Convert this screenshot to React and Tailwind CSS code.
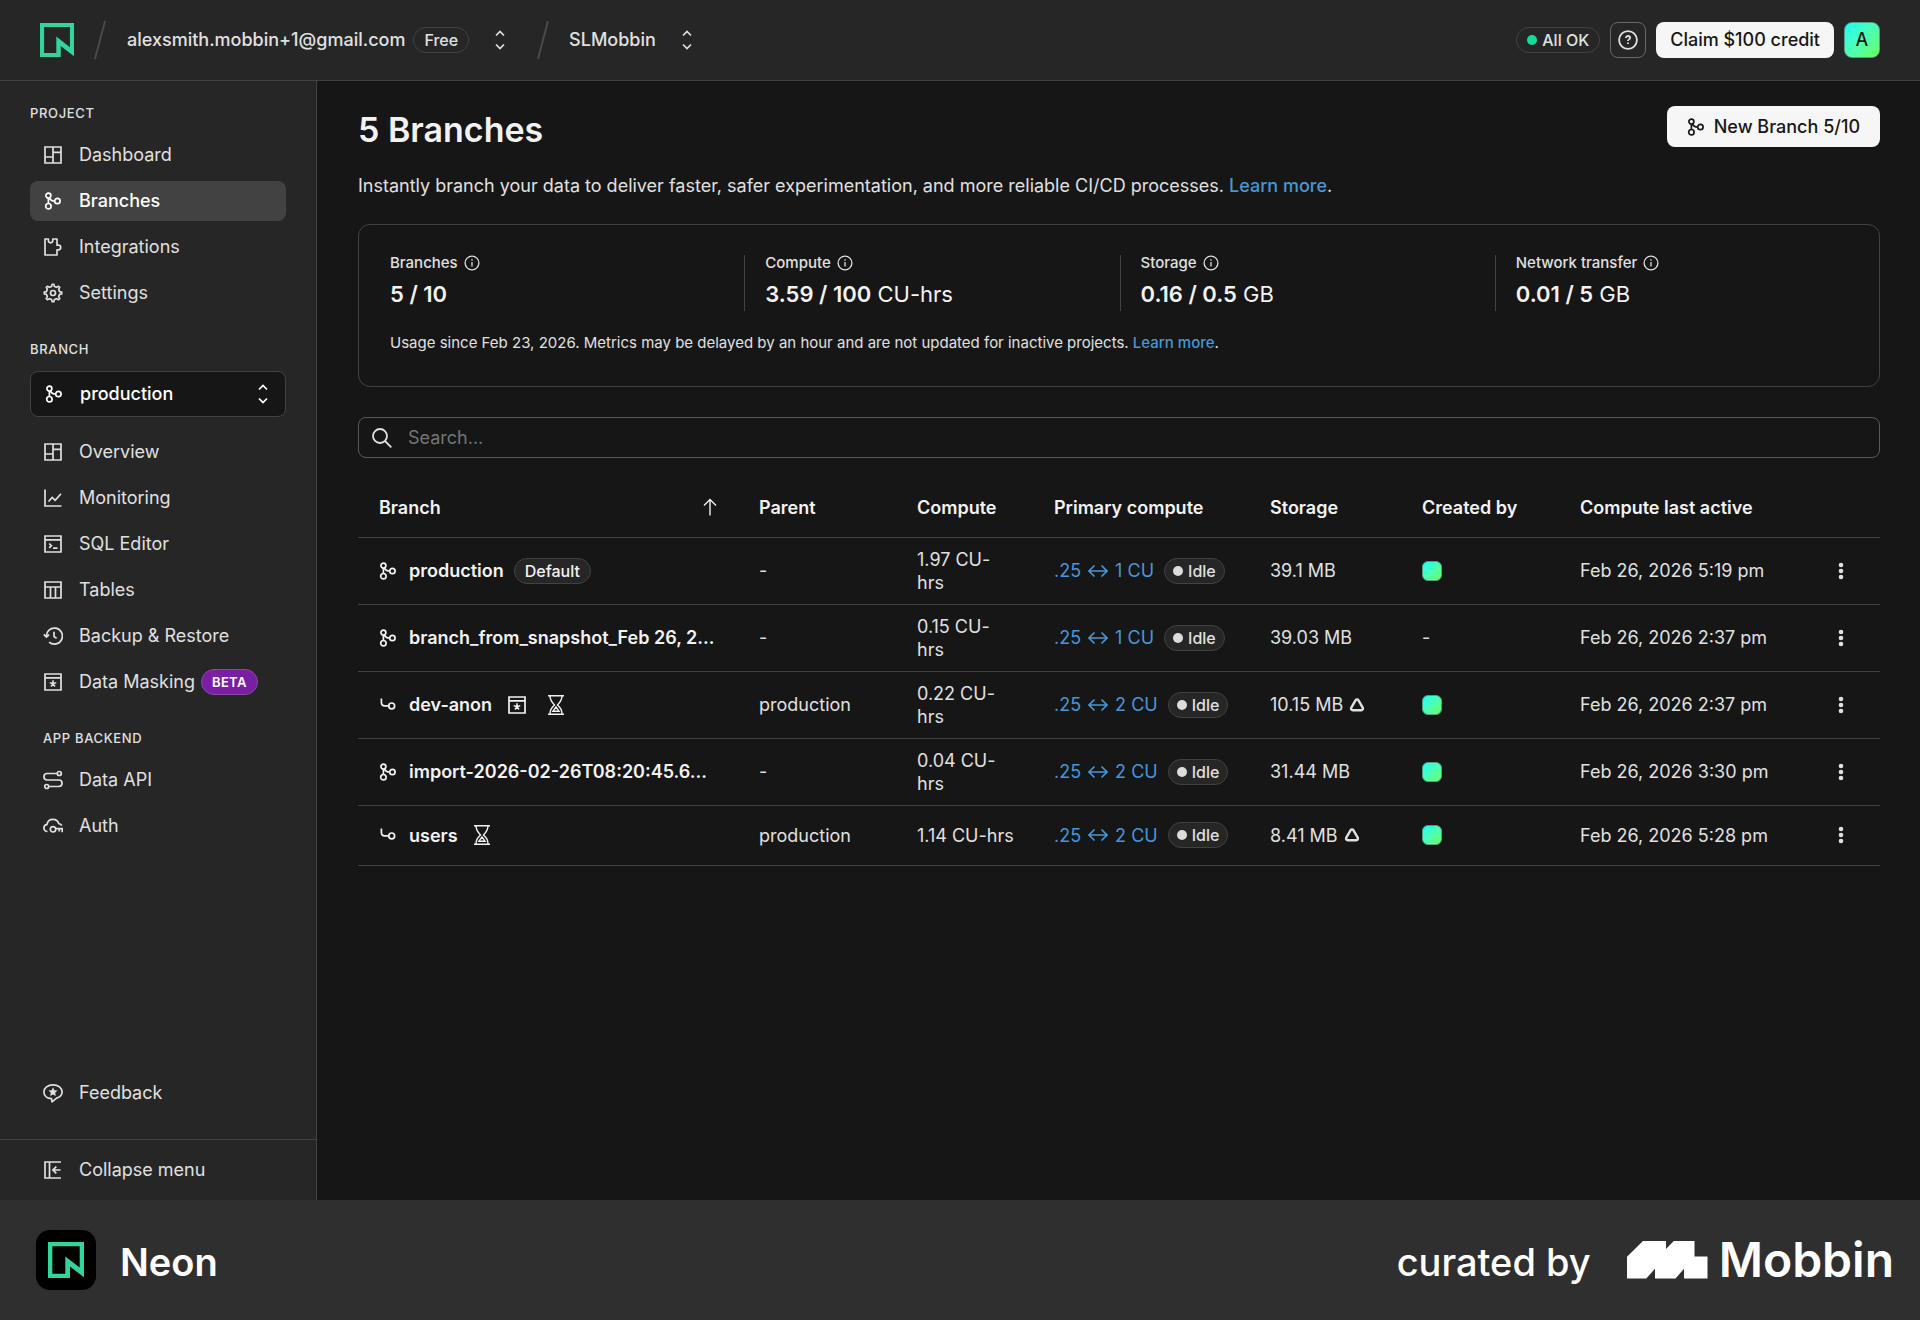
import { useState } from 'react';

const Icon = ({ className = 'w-[18px] h-[18px]', size = 18, children }) => (
    <svg viewBox={`0 0 ${size} ${size}`} className={`${className} shrink-0`} fill="none" stroke="currentColor" strokeWidth="1.7" aria-hidden="true">
        {children}
    </svg>
);

const BranchIcon = ({ className }) => (
    <Icon className={className}>
        <circle cx="4.4" cy="3.6" r="2.5" />
        <circle cx="4.4" cy="14.2" r="2.7" />
        <circle cx="13.4" cy="9" r="2.7" />
        <path d="M4.4 6.1v5.4M5.4 5.9C6.2 8 7.6 9 10.7 9" />
    </Icon>
);

const ChildBranchIcon = () => (
    <Icon>
        <path d="M2.4 2.5v3.8c0 2.6 1 3.6 3.2 3.6h4" />
        <circle cx="12.7" cy="9.9" r="2.9" />
    </Icon>
);

const LayoutIcon = () => (
    <Icon>
        <path d="M1 1h16v16H1zM9 1v16M1 11h8M9 6.3h8" />
    </Icon>
);

const PuzzleIcon = () => (
    <Icon>
        <path d="M1 1h3.4v1.6a2.2 2.2 0 0 0 4.400 0V1h4.200v6.200h1.400a2.300 2.300 0 0 1 0 4.600H13V17H1z" strokeLinejoin="round" />
    </Icon>
);

const GearIcon = () => (
    <Icon className="w-5 h-5" size={24}>
        <g strokeWidth="2" strokeLinejoin="round">
            <path d="M10.3 4.1 11 1.5h2l.7 2.6 2.6 1.1 2.4-1.3 1.400 1.400-1.300 2.400 1.100 2.600 2.600.7v2l-2.600.7-1.100 2.600 1.300 2.400-1.400 1.400-2.400-1.300-2.600 1.100-.7 2.600h-2l-.7-2.600-2.600-1.100-2.400 1.300-1.400-1.400 1.300-2.400-1.100-2.600-2.600-.7v-2l2.600-.7 1.100-2.600-1.300-2.400 1.400-1.400 2.400 1.300z" />
            <circle cx="12" cy="12" r="3" />
        </g>
    </Icon>
);

const ChartIcon = () => (
    <Icon>
        <path d="M1 .5V17h16.500M4.500 12.500 8.200 8.500l3 2.800L17 4.800" />
    </Icon>
);

const TerminalIcon = () => (
    <Icon>
        <path d="M1 1h16v16H1zM1 4.800h16M5.200 8.500l2.200 2.200-2.200 2.200M9 13.200h4.500" />
    </Icon>
);

const TablesIcon = () => (
    <Icon>
        <path d="M1 1h16v16H1zM1 6h16M6.500 6v11M11.500 6v11" />
    </Icon>
);

const HistoryIcon = () => (
    <Icon className="w-5 h-5" size={20}>
        <path d="M3.400 10.800a8 8 0 1 1 2.700 5.300M.8 8.400l2.600 2.700 2.700-2.500M11 5.800v4.700l2.600 1.900" />
    </Icon>
);

const MaskIcon = ({ className }) => (
    <Icon className={className}>
        <path d="M1 1h16v16H1zM1 4.800h16" />
        <path d="M9 10.700V7.200M9 10.700l3.300-1.100M9 10.700l2 2.800M9 10.700l-2 2.800M9 10.700 5.700 9.600" strokeWidth="1.500" />
    </Icon>
);

const RouteIcon = () => (
    <Icon className="w-5 h-5" size={20}>
        <circle cx="16.300" cy="3.500" r="2" />
        <circle cx="3.700" cy="16.500" r="2" />
        <path d="M14.300 3.500H4.200a3.250 3.250 0 0 0 0 6.500h11.600a3.250 3.250 0 0 1 0 6.500H5.700" />
    </Icon>
);

const CloudKeyIcon = () => (
    <Icon className="w-5 h-5" size={20}>
        <path d="M4.500 15.500C2.300 15.500.9 14 .9 12c0-1.900 1.300-3.300 3.100-3.600C4.500 5.400 6.900 3.300 10 3.300c2.800 0 5 1.700 5.700 4.200 1.400.4 2.500 1 3.100 2.200" />
        <circle cx="10" cy="13.300" r="2.700" />
        <path d="M12.700 12.700h6.500v3.500M16.200 12.700v2.800" />
    </Icon>
);

const FeedbackIcon = () => (
    <Icon className="w-5 h-5" size={20}>
        <path d="M8.500 15.700C4 15.300.9 12.500.9 8.900.9 5 4.800 1.900 10 1.900s9.100 3.100 9.100 7c0 3-2.400 5.200-5.500 6.200L9 18.800z" strokeLinejoin="round" />
        <path d="m10 4.300 1.400 2.900 3.100.4-2.300 2.200.6 3.100-2.800-1.500-2.800 1.500.6-3.100-2.300-2.200 3.100-.4z" fill="currentColor" stroke="none" />
    </Icon>
);

const CollapseIcon = () => (
    <Icon>
        <path d="M17 1H1v16h16M5.500 1v16M16.500 9H9M12.300 5.600 8.900 9l3.400 3.400" />
    </Icon>
);

const HourglassIcon = () => (
    <svg viewBox="0 0 16 20" className="w-4 h-5 shrink-0" fill="none" stroke="currentColor" strokeWidth="1.400" aria-hidden="true">
        <path d="M0 .8h16M0 19.200h16M2 .8c0 4 1 5.700 4.500 9.200C3 13.500 2 15 2 19.200M14 .8c0 4-1 5.700-4.500 9.200 3.500 3.500 4.500 5 4.500 9.200M5 16.200 8 12l3 4.200z" />
    </svg>
);

const DeltaIcon = () => (
    <svg viewBox="0 0 16 14" className="w-4 h-[14px] shrink-0" fill="none" stroke="currentColor" strokeWidth="2.400" strokeLinejoin="round" aria-hidden="true">
        <path d="M6.500 2.300c.7-1.200 2.300-1.200 3 0l4.200 7.300c.7 1.200-.1 2.600-1.500 2.600H3.800c-1.400 0-2.200-1.400-1.500-2.600z" />
    </svg>
);

const SelectorIcon = () => (
    <svg viewBox="0 0 10 20" className="w-[10px] h-5 shrink-0" fill="none" stroke="currentColor" strokeWidth="1.700" aria-hidden="true">
        <path d="M1 5.500 5 1.500l4 4M1 14.500l4 4 4-4" />
    </svg>
);

const InfoIcon = () => (
    <svg viewBox="0 0 16 16" className="w-4 h-4 shrink-0" fill="none" stroke="currentColor" strokeWidth="1.300" aria-hidden="true">
        <circle cx="8" cy="8" r="6.900" />
        <path d="M8 7v4.500M8 4.300v1.400" />
    </svg>
);

const NeonLogo = ({ className }) => (
    <svg viewBox="0 0 100 100" className={className} aria-hidden="true">
        <path fill="#34d59a" fillRule="evenodd" d="M0 0H100V98L61 68V100H0ZM12 12V88H48V40L88 71V12Z" />
    </svg>
);

const Slash = () => (
    <svg viewBox="0 0 12 38" className="w-3 h-[38px] shrink-0" stroke="#4a4a4a" strokeWidth="2" aria-hidden="true">
        <path d="M11 0 1 38" />
    </svg>
);

const projectLinks = [
    { label: 'Dashboard', icon: LayoutIcon },
    { label: 'Branches', icon: BranchIcon, active: true },
    { label: 'Integrations', icon: PuzzleIcon },
    { label: 'Settings', icon: GearIcon },
];

const branchLinks = [
    { label: 'Overview', icon: LayoutIcon },
    { label: 'Monitoring', icon: ChartIcon },
    { label: 'SQL Editor', icon: TerminalIcon },
    { label: 'Tables', icon: TablesIcon },
    { label: 'Backup & Restore', icon: HistoryIcon },
    { label: 'Data Masking', icon: MaskIcon, beta: true },
];

const backendLinks = [
    { label: 'Data API', icon: RouteIcon },
    { label: 'Auth', icon: CloudKeyIcon },
];

const stats = [
    { label: 'Branches', value: '5 / 10', unit: '' },
    { label: 'Compute', value: '3.59 / 100', unit: 'CU-hrs' },
    { label: 'Storage', value: '0.16 / 0.5', unit: 'GB' },
    { label: 'Network transfer', value: '0.01 / 5', unit: 'GB' },
];

const branches = [
    { name: 'production', isDefault: true, parent: '-', compute: '1.97 CU-hrs', max: '1 CU', storage: '39.1 MB', avatar: true, active: 'Feb 26, 2026 5:19 pm' },
    { name: 'branch_from_snapshot_Feb 26, 2…', parent: '-', compute: '0.15 CU-hrs', max: '1 CU', storage: '39.03 MB', avatar: false, active: 'Feb 26, 2026 2:37 pm' },
    { name: 'dev-anon', child: true, masked: true, expires: true, parent: 'production', compute: '0.22 CU-hrs', max: '2 CU', storage: '10.15 MB', avatar: true, active: 'Feb 26, 2026 2:37 pm' },
    { name: 'import-2026-02-26T08:20:45.6…', parent: '-', compute: '0.04 CU-hrs', max: '2 CU', storage: '31.44 MB', avatar: true, active: 'Feb 26, 2026 3:30 pm' },
    { name: 'users', child: true, expires: true, parent: 'production', compute: '1.14 CU-hrs', max: '2 CU', storage: '8.41 MB', avatar: true, active: 'Feb 26, 2026 5:28 pm' },
];

const NavItem = ({ item }) => (
    <li>
        <a
            href="#"
            className={`flex items-center h-10 px-[13px] rounded-lg hover:bg-[#333333] ${item.active ? 'bg-[#424242] font-medium text-white' : ''}`}
        >
            <span className="w-5 mr-4 flex justify-center"><item.icon /></span>
            {item.label}
            {item.beta && (
                <span className="ml-[6px] h-[26px] px-[10px] flex items-center rounded-full bg-[#7a1fa2] border border-[#8e44ad] text-[13px] font-semibold tracking-wide text-white">
                    BETA
                </span>
            )}
        </a>
    </li>
);

const NavList = ({ items }) => (
    <ul className="flex flex-col gap-[6px]">
        {items.map((item) => <NavItem key={item.label} item={item} />)}
    </ul>
);

const Header = () => (
    <header className="h-[81px] flex items-center justify-between pl-10 pr-10 bg-[#262626] border-b border-[#424242]">
        <div className="flex items-center">
            <a href="#" aria-label="Neon" className="mr-5"><NeonLogo className="w-[34px] h-[34px]" /></a>
            <Slash />
            <span className="ml-[21px] font-medium">alexsmith.mobbin+1@gmail.com</span>
            <span className="ml-2 h-[26px] px-[10px] flex items-center rounded-full border border-[#424242] text-base font-medium">Free</span>
            <button className="ml-[26px] mr-8" aria-label="Switch organization"><SelectorIcon /></button>
            <Slash />
            <span className="ml-5 font-medium">SLMobbin</span>
            <button className="ml-[26px]" aria-label="Switch project"><SelectorIcon /></button>
        </div>
        <div className="flex items-center gap-[10px]">
            <a href="#" className="h-[26px] px-[10px] flex items-center gap-[5px] rounded-full border border-[#424242] text-base font-medium">
                <span className="w-[10px] h-[10px] rounded-full bg-[#12dc93]" />
                All OK
            </a>
            <button aria-label="Help" className="w-9 h-9 flex items-center justify-center rounded-lg border border-[#6a6a6a]">
                <svg viewBox="0 0 20 20" className="w-5 h-5" fill="none" stroke="currentColor" strokeWidth="1.800">
                    <circle cx="10" cy="10" r="8.900" />
                    <path d="M7.900 8c0-1.200.9-2 2.100-2s2.100.8 2.100 1.900c0 1.400-2.100 1.600-2.100 3.200M10 12.400v1.700" />
                </svg>
            </button>
            <button className="h-9 px-[14px] rounded-lg bg-[#f6f6f6] text-[#171717] font-medium">Claim $100 credit</button>
            <button className="w-9 h-9 rounded-lg border border-[#5a9a80] bg-linear-135 from-[#12fff7] to-[#6cff57] text-[#171717] font-medium">A</button>
        </div>
    </header>
);

const Sidebar = () => (
    <aside className="w-[317px] shrink-0 flex flex-col bg-[#262626] border-r border-[#424242]">
        <nav className="flex-1 flex flex-col px-[30px] pt-[22px]">
            <h2 className="mb-3 text-[13px] leading-5 font-medium tracking-wider">PROJECT</h2>
            <NavList items={projectLinks} />

            <h2 className="mt-[26px] mb-3 text-[13px] leading-5 font-medium tracking-wider">BRANCH</h2>
            <button className="h-[46px] shrink-0 px-[13px] mb-[15px] flex items-center rounded-lg border border-[#424242] bg-[#161616] text-white font-medium">
                <span className="w-5 mr-4 flex justify-center"><BranchIcon /></span>
                production
                <span className="ml-auto mr-1"><SelectorIcon /></span>
            </button>
            <NavList items={branchLinks} />

            <h2 className="mt-[26px] mb-3 ml-[13px] text-[13px] leading-5 font-medium tracking-wider">APP BACKEND</h2>
            <NavList items={backendLinks} />

            <div className="mt-auto pb-[26px]">
                <NavList items={[{ label: 'Feedback', icon: FeedbackIcon }]} />
            </div>
        </nav>
        <div className="px-[30px] py-[10px] border-t border-[#424242]">
            <button className="w-full h-10 px-[13px] flex items-center">
                <span className="w-5 mr-4 flex justify-center"><CollapseIcon /></span>
                Collapse menu
            </button>
        </div>
    </aside>
);

const UsageCard = () => (
    <section className="mt-[26px] pt-[30px] pb-[31px] rounded-xl border border-[#424242]">
        <div className="grid grid-cols-4 gap-5 pl-[31px] pr-2">
            {stats.map((stat, i) => (
                <div key={stat.label} className={`h-14 flex flex-col justify-between ${i < 3 ? 'border-r border-[#424242]' : ''}`}>
                    <div className="flex items-center gap-[6px] text-[15px] leading-4 font-medium">
                        {stat.label}
                        <InfoIcon />
                    </div>
                    <div className="text-[22px] leading-[34px] text-[#f2f2f2]">
                        <span className="font-semibold">{stat.value}</span> {stat.unit}
                    </div>
                </div>
            ))}
        </div>
        <p className="mt-5 px-[31px] text-[15px] leading-6">
            Usage since Feb 23, 2026. Metrics may be delayed by an hour and are not updated for inactive projects.{' '}
            <a href="#" className="text-[#4796d8] font-medium">Learn more</a>.
        </p>
    </section>
);

const BranchRow = ({ branch }) => (
    <tr className="h-[60px] border-b border-[#424242]">
        <td className="pl-[21px] py-[10px]">
            <div className="flex items-center text-[#f2f2f2] whitespace-nowrap">
                <span className="mr-3">{branch.child ? <ChildBranchIcon /> : <BranchIcon />}</span>
                <a href="#" className="font-semibold">{branch.name}</a>
                {branch.isDefault && (
                    <span className="ml-[10px] h-[26px] px-[10px] flex items-center rounded-full bg-[#262626] border border-[#424242] text-base font-medium">Default</span>
                )}
                {branch.masked && <span className="ml-4 mr-[6px]"><MaskIcon /></span>}
                {branch.expires && <span className="ml-4"><HourglassIcon /></span>}
            </div>
        </td>
        <td className="px-5 py-[10px]">{branch.parent}</td>
        <td className="px-5 py-[10px]">{branch.compute}</td>
        <td className="pl-5 py-[10px]">
            <div className="flex items-center whitespace-nowrap">
                <a href="#" className="flex items-center text-[#4796d8]">
                    .25
                    <svg viewBox="0 0 20 14" className="w-5 h-[14px] mx-[7px]" fill="none" stroke="currentColor" strokeWidth="1.600">
                        <path d="M1 7h18M6.500 1.500 1 7l5.500 5.500M13.500 1.500 19 7l-5.500 5.500" />
                    </svg>
                    {branch.max}
                </a>
                <span className="ml-[10px] h-[26px] px-[8px] flex items-center gap-[5px] rounded-full bg-[#262626] border border-[#424242] text-base font-medium">
                    <span className="w-[10px] h-[10px] rounded-full bg-[#dcdcdc]" />
                    Idle
                </span>
            </div>
        </td>
        <td className="pl-5 py-[10px]">
            <div className="flex items-center gap-[6px] whitespace-nowrap">
                {branch.storage}
                {branch.child && <DeltaIcon />}
            </div>
        </td>
        <td className="pl-5 py-[10px]">
            {branch.avatar ? (
                <span className="block w-5 h-5 rounded-md border border-[#5a9a80] bg-linear-135 from-[#12fff7] to-[#6cff57]" />
            ) : '-'}
        </td>
        <td className="pl-5 py-[10px]">{branch.active}</td>
        <td className="pr-[29px] py-[10px]">
            <button aria-label={`Actions for ${branch.name}`} className="ml-auto w-5 h-5 flex items-center justify-center">
                <svg viewBox="0 0 6 18" className="w-[6px] h-[18px]" fill="currentColor">
                    <circle cx="3" cy="3" r="2.300" />
                    <circle cx="3" cy="9" r="2.300" />
                    <circle cx="3" cy="15" r="2.300" />
                </svg>
            </button>
        </td>
    </tr>
);

const BranchTable = ({ rows }) => (
    <table className="w-full mt-5 table-fixed border-collapse leading-[23px] text-left">
        <thead>
            <tr className="h-[59px] border-b border-[#424242] text-[#f2f2f2]">
                <th className="w-[381px] pl-[21px] font-semibold">
                    <button className="w-full flex items-center justify-between pr-[22px]">
                        Branch
                        <svg viewBox="0 0 14 18" className="w-[14px] h-[18px]" fill="none" stroke="currentColor" strokeWidth="1.400">
                            <path d="M7 17.500V1.500M1 7.500l6-6 6 6" />
                        </svg>
                    </button>
                </th>
                <th className="w-[158px] pl-5 font-semibold">Parent</th>
                <th className="w-[137px] pl-5 font-semibold">Compute</th>
                <th className="w-[216px] pl-5 font-semibold">Primary compute</th>
                <th className="w-[152px] pl-5 font-semibold">Storage</th>
                <th className="w-[158px] pl-5 font-semibold">Created by</th>
                <th className="pl-5 font-semibold">Compute last active</th>
                <th className="w-[70px]" aria-label="Actions" />
            </tr>
        </thead>
        <tbody>
            {rows.map((branch) => <BranchRow key={branch.name} branch={branch} />)}
        </tbody>
    </table>
);

const Footer = () => (
    <footer className="h-[120px] flex items-center justify-between pl-9 pr-[26px] bg-[#2f2f2f] text-white">
        <div className="flex items-center gap-6">
            <span className="w-[60px] h-[60px] flex items-center justify-center rounded-[14px] bg-black">
                <NeonLogo className="w-9 h-9" />
            </span>
            <span className="pt-1 text-[38px] font-semibold">Neon</span>
        </div>
        <div className="flex items-center">
            <span className="mr-9 pt-1 text-[38px] font-medium">curated by</span>
            <svg viewBox="0 0 81 38" className="w-[81px] h-[38px] mr-[11px]" fill="currentColor" aria-hidden="true">
                <path d="M0 37.500V15.700L16 0h23v8L46.800 0h20.700v15.500h13v22H57v-9.800l-8.400 9.800H28v-9.800l-8.700 9.800z" />
            </svg>
            <span className="text-[48px] font-semibold">Mobbin</span>
        </div>
    </footer>
);

const App = () => {
    const [search, setSearch] = useState('');
    const rows = branches.filter((branch) => branch.name.toLowerCase().includes(search.toLowerCase()));

    return (
        <div className="min-h-screen flex flex-col bg-[#161616] font-['Inter',sans-serif] text-[18px] leading-6 text-[#e0e0e0]">
            <Header />
            <div className="flex-1 flex">
                <Sidebar />
                <main className="flex-1 min-w-0 pl-[41px] pr-10 pt-[25px]">
                    <div className="flex items-start justify-between">
                        <h1 className="text-[34px] leading-[48px] font-semibold text-[#f2f2f2]">5 Branches</h1>
                        <button className="h-[41px] px-5 flex items-center gap-[9px] rounded-lg bg-[#f6f6f6] text-[#171717] font-medium">
                            <BranchIcon />
                            New Branch 5/10
                        </button>
                    </div>
                    <p className="mt-5">
                        Instantly branch your data to deliver faster, safer experimentation, and more reliable CI/CD processes.{' '}
                        <a href="#" className="text-[#4796d8] font-medium">Learn more</a>.
                    </p>
                    <UsageCard />
                    <label className="mt-[30px] h-[41px] px-[13px] flex items-center gap-4 rounded-lg border border-[#5a5a5a]">
                        <svg viewBox="0 0 20 20" className="w-5 h-5 shrink-0" fill="none" stroke="currentColor" strokeWidth="1.800" aria-hidden="true">
                            <circle cx="8" cy="8" r="7" />
                            <path d="m13 13 6.300 6.300" />
                        </svg>
                        <input
                            type="text"
                            aria-label="Search branches"
                            placeholder="Search..."
                            className="flex-1 bg-transparent outline-none placeholder:text-[#757575]"
                            value={search}
                            onChange={(e) => setSearch(e.target.value)}
                        />
                    </label>
                    <BranchTable rows={rows} />
                </main>
            </div>
            <Footer />
        </div>
    );
};

export default App;
